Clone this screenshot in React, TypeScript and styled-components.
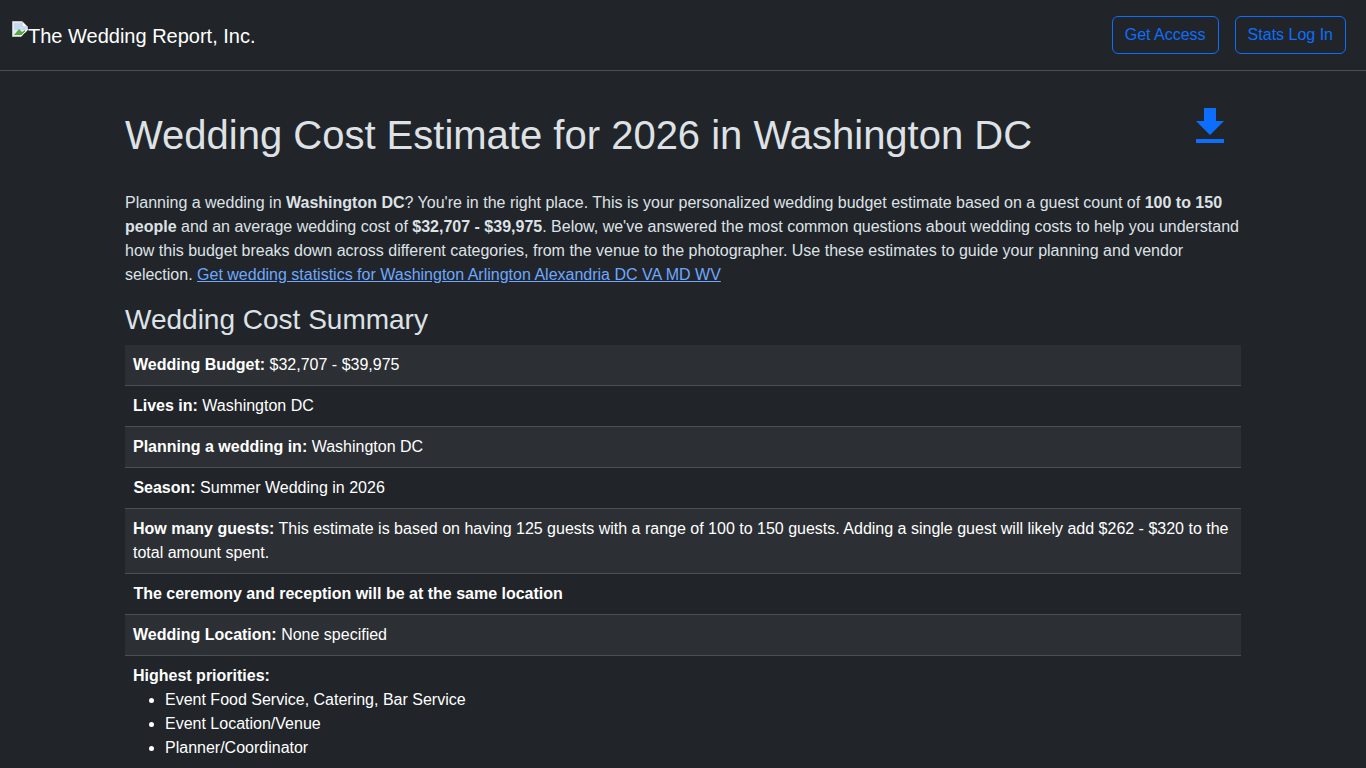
import { createGlobalStyle, styled } from "styled-components";

const GlobalStyle = createGlobalStyle`
  * {
    box-sizing: border-box;
  }
  html, body {
    margin: 0;
    background: #212529;
  }
  body {
    color: #dee2e6;
    font-family: "Liberation Sans", Arial, sans-serif;
    font-size: 16px;
    line-height: 1.5;
  }
`;

const rows = [
  { label: "Wedding Budget:", value: " $32,707 - $39,975" },
  { label: "Lives in:", value: " Washington DC" },
  { label: "Planning a wedding in:", value: " Washington DC" },
  { label: "Season:", value: " Summer Wedding in 2026", nudge: true },
  {
    label: "How many guests:",
    value:
      " This estimate is based on having 125 guests with a range of 100 to 150 guests. Adding a single guest will likely add $262 - $320 to the total amount spent.",
  },
  { label: "The ceremony and reception will be at the same location", value: "", nudge: true },
  { label: "Wedding Location:", value: " None specified" },
];

const priorities = [
  "Event Food Service, Catering, Bar Service",
  "Event Location/Venue",
  "Planner/Coordinator",
];

function BrokenImage() {
  return (
    <BrokenIcon width="16" height="16" viewBox="0 0 16 16">
      <path d="M0.5 0.5H10L15.5 6V15.5H0.5Z" fill="#e8eef0" stroke="#b9c0c4" />
      <path d="M10 0.5V6H15.5" fill="#ffffff" stroke="#b9c0c4" />
      <path d="M2 2H9V7H14V9H2Z" fill="#c3d9f5" />
      <path d="M2 14L7 8L10 11L13 9V14Z" fill="#5aa845" />
      <path d="M9 16L16 9V16Z" fill="#212529" />
      <path d="M8.5 15.5L15.5 8.5" stroke="#ffffff" />
    </BrokenIcon>
  );
}

function DownloadIcon() {
  return (
    <svg width="28" height="36" viewBox="0 0 28 36">
      <path d="M8 0H20V13H28L14 27L0 13H8Z" fill="#0d6efd" />
      <rect x="0" y="31" width="28" height="4" fill="#0d6efd" />
    </svg>
  );
}

export default function App() {
  return (
    <>
      <GlobalStyle />
      <Navbar>
        <Brand>
          <BrokenImage />
          The Wedding Report, Inc.
        </Brand>
        <NavActions>
          <OutlineButton href="#">Get Access</OutlineButton>
          <OutlineButton href="#">Stats Log In</OutlineButton>
        </NavActions>
      </Navbar>
      <Container>
        <TitleRow>
          <Title>Wedding Cost Estimate for 2026 in Washington DC</Title>
          <DownloadLink href="#" aria-label="Download">
            <DownloadIcon />
          </DownloadLink>
        </TitleRow>
        <Intro>
          Planning a wedding in <strong>Washington DC</strong>? You're in the
          right place. This is your personalized wedding budget estimate based
          on a guest count of <strong>100 to 150 people</strong> and an average
          wedding cost of <strong>$32,707 - $39,975</strong>. Below, we've
          answered the most common questions about wedding costs to help you
          understand how this budget breaks down across different categories,
          from the venue to the photographer. Use these estimates to guide your
          planning and vendor selection.{" "}
          <a href="#">Get wedding statistics for Washington Arlington Alexandria DC VA MD WV</a>
        </Intro>
        <SectionTitle>Wedding Cost Summary</SectionTitle>
        <SummaryList>
          {rows.map((row) => (
            <SummaryRow key={row.label} $nudge={row.nudge}>
              <strong>{row.label}</strong>
              {row.value}
            </SummaryRow>
          ))}
          <SummaryRow>
            <strong>Highest priorities:</strong>
            <PriorityList>
              {priorities.map((item) => (
                <li key={item}>{item}</li>
              ))}
            </PriorityList>
          </SummaryRow>
        </SummaryList>
      </Container>
    </>
  );
}

const Navbar = styled.nav`
  height: 71px;
  padding: 0 20px 0 12px;
  display: flex;
  align-items: center;
  justify-content: space-between;
  border-bottom: 1px solid #495057;
`;

const Brand = styled.a`
  display: flex;
  align-items: flex-start;
  color: #fff;
  font-size: 20px;
  line-height: 30px;
  height: 30px;
  margin-top: 2px;
`;

const BrokenIcon = styled.svg`
  flex-shrink: 0;
`;

const NavActions = styled.div`
  display: flex;
  gap: 16px;
`;

const OutlineButton = styled.a`
  display: block;
  padding: 6px 12px;
  border: 1px solid #0d6efd;
  border-radius: 6px;
  color: #0d6efd;
  font-size: 16px;
  text-decoration: none;
`;

const Container = styled.main`
  width: 1140px;
  margin: 0 auto;
  padding: 0 12px;
`;

const TitleRow = styled.div`
  display: flex;
  justify-content: space-between;
  align-items: flex-start;
  padding-top: 40px;
  margin-bottom: 32px;
`;

const Title = styled.h1`
  margin: 0;
  font-size: 40px;
  font-weight: 500;
  line-height: 48px;
`;

const DownloadLink = styled.a`
  display: block;
  margin: -3px 17px 0 0;
  height: 36px;
`;

const Intro = styled.p`
  margin: 0 0 16px;
  a {
    color: #6ea8fe;
  }
`;

const SectionTitle = styled.h3`
  margin: 0 0 8px;
  font-size: 28px;
  font-weight: 500;
  line-height: 33.6px;
`;

const SummaryList = styled.div`
  color: #fff;
`;

const SummaryRow = styled.div<{ $nudge?: boolean }>`
  padding: 8px;
  padding-left: ${({ $nudge }) => ($nudge ? "8.4px" : "8px")};
  border-bottom: 1px solid #495057;
  &:nth-child(odd) {
    background: #2c3034;
  }
  &:last-child {
    background: transparent;
    border-bottom: none;
  }
`;

const PriorityList = styled.ul`
  margin: 0;
  padding-left: 32px;
`;
